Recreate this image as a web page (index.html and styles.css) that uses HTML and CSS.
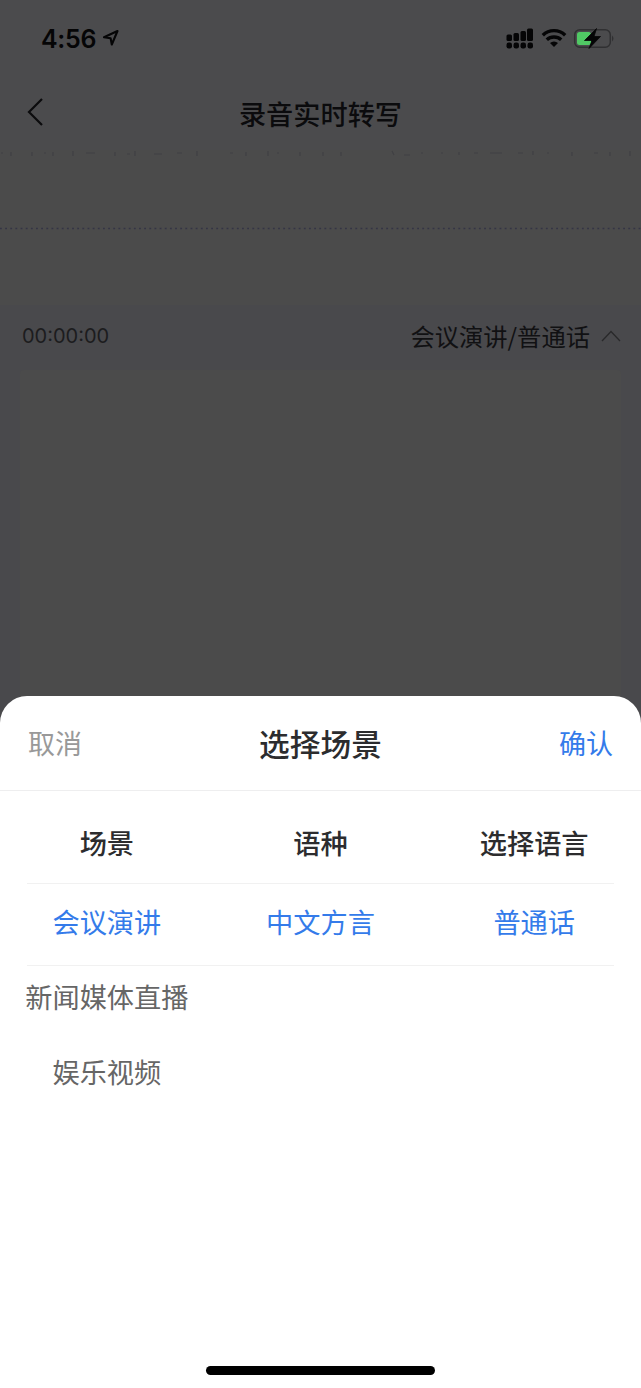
FILE: index.html
```html
<!DOCTYPE html>
<html lang="zh-CN">
<head>
<meta charset="utf-8">
<title>录音实时转写</title>
<link rel="stylesheet" href="styles.css">
</head>
<body>
<div class="phone">
  <header class="top">
    <div class="status">
      <span class="clock">4:56</span>
      <svg class="location" width="18" height="18" viewBox="0 0 18 18"><path d="M2 8.300 15.500 2 9.800 15.500 8.600 9.200Z" fill="none" stroke="#050506" stroke-width="2.100" stroke-linejoin="round"/></svg>
      <svg class="indicators" width="110" height="24" viewBox="0 0 110 24">
        <g fill="#050506">
          <rect x="1.500" y="8.500" width="5.500" height="6.500" rx="1.500"/><rect x="8.500" y="7" width="5.500" height="8" rx="1.500"/><rect x="15.500" y="5" width="5.500" height="10" rx="1.500"/><rect x="22" y="2.500" width="6" height="12.500" rx="1.500"/>
          <rect x="1.500" y="16.500" width="5.500" height="6" rx="2.200"/><rect x="8.500" y="16.500" width="5.500" height="6" rx="2.200"/><rect x="15.500" y="16.500" width="5.500" height="6" rx="2.200"/><rect x="22.500" y="16.500" width="5.500" height="6" rx="2.200"/>
          <path d="m49 21-4-4a6 6 0 0 1 8 0Z"/>
        </g>
        <path d="M37.800 9.200a16 16 0 0 1 22.400 0M41.800 13.800a10.500 10.500 0 0 1 14.400 0" fill="none" stroke="#050506" stroke-width="3.400"/>
        <rect x="69.700" y="3.700" width="35.600" height="17.600" rx="5" fill="none" stroke="#303032" stroke-width="1.500"/>
        <path d="M107 9.500q3 3 0 6Z" fill="#303032"/>
        <rect x="72" y="6" width="14" height="13" rx="2.500" fill="#50c864"/>
        <path d="M91.500 2.500 79.500 14.500h7.500l-3 8L95.500 10.500h-6.500Z" fill="#050506" stroke="#050506" stroke-width=".8"/>
      </svg>
    </div>
    <div class="nav">
      <svg class="back" width="20" height="30" viewBox="0 0 20 30"><path d="M17 2 4 15l13 13" fill="none" stroke="#0b0b0d" stroke-width="2.200"/></svg>
      <h1 class="page-title">录音实时转写</h1>
    </div>
  </header>

  <section class="wave">
    <svg class="ticks" width="641" height="8" viewBox="0 0 641 8"><path d="M1 3h2M11 2v4M32 2v4M44 3h2M53 2v4M73 1v5M86 3h9M115 2v4M127 4h3M135 1v5M154 4h8M177 3h5M197 1v5M230 3h3M246 2v4M268 1v5M277 3h2M300 2v4M323 2v4M341 2v4M392 1l2 4M404 5h6M421 3h2M441 3h2M459 2v3M474 3h4M490 3h12M518 3h5M533 1v4M547 3h2M572 2v4M594 3h4M610 2v4M630 1v5" stroke="#404044" stroke-width="1.200" fill="none"/></svg>
    <svg class="baseline" width="641" height="3" viewBox="0 0 641 3"><path d="M0 1.500h641" stroke="#343445" stroke-width="1.500" stroke-dasharray="1.800 3.350"/></svg>
  </section>

  <section class="record">
    <div class="record-bar">
      <span class="timer">00:00:00</span>
      <span class="mode">会议演讲/普通话</span>
      <svg class="chevron" width="20" height="12" viewBox="0 0 20 12"><path d="M1 11 10 1.500 19 11" fill="none" stroke="#29292b" stroke-width="1.300"/></svg>
    </div>
    <div class="transcript"></div>
  </section>

  <section class="sheet">
    <div class="sheet-head">
      <span class="cancel">取消</span>
      <h2 class="sheet-title">选择场景</h2>
      <span class="confirm">确认</span>
    </div>
    <div class="columns heads"><span>场景</span><span>语种</span><span>选择语言</span></div>
    <div class="columns selected"><span>会议演讲</span><span>中文方言</span><span>普通话</span></div>
    <div class="columns option"><span>新闻媒体直播</span></div>
    <div class="columns option"><span>娱乐视频</span></div>
    <div class="home-bar"></div>
  </section>
</div>
</body>
</html>
```
FILE: styles.css
```css
* { box-sizing: border-box; }
body { margin: 0; font-family: "Noto Sans CJK SC", sans-serif; }
.phone { width: 641px; height: 1388px; display: flex; flex-direction: column; overflow: hidden; background: #49494c; }
.top { height: 150px; background: #4b4b4d; flex: none; }
.status { height: 76px; display: flex; align-items: center; padding: 0 26px 0 41px; color: #050506; }
.clock { font: 600 25px/30px Inter, sans-serif; letter-spacing: -0.3px; width: 60px; white-space: nowrap; padding-top: 2px; }
.location { margin-left: 1px; }
.indicators { margin-left: auto; }
.nav { display: grid; grid-template-columns: 120px 1fr 120px; align-items: center; height: 74px; }
.back { margin: 0 0 2px 25px; }
.page-title { margin: 0; font-size: 27.2px; line-height: 40px; font-weight: 500; text-align: center; color: #0b0b0d; }
.wave { height: 155px; background: #4b4b4b; flex: none; }
.ticks, .baseline { display: block; }
.baseline { margin-top: 69px; }
.record { height: 409px; padding: 0 20px; display: flex; flex-direction: column; flex: none; }
.record-bar { height: 65px; display: flex; align-items: center; padding: 0 0 4px 2px; }
.timer { font: 400 20px/30px Inter, sans-serif; color: #1c1c1e; }
.mode { margin-left: auto; font-size: 24.3px; line-height: 36px; color: #111113; }
.chevron { margin-left: 11px; }
.transcript { flex: 1; background: #4b4b4b; border-radius: 4px 4px 0 0; }
.sheet { height: 692px; margin-top: -18px; flex: none; display: flex; flex-direction: column; background: #fff; border-radius: 27px 27px 0 0; }
.sheet-head { height: 95px; display: grid; grid-template-columns: 1fr auto 1fr; align-items: center; padding: 0 28px 1px; border-bottom: 1px solid #eeeeef; font-size: 27px; line-height: 40px; }
.cancel { color: #999; }
.sheet-title { margin: 0; font-size: 30.7px; line-height: 44px; font-weight: 500; color: #2c2c2e; }
.confirm { color: #347bea; text-align: right; }
.columns { display: grid; grid-template-columns: repeat(3, 1fr); align-items: center; text-align: center; font-size: 27.2px; line-height: 40px; white-space: nowrap; }
.heads { height: 93px; padding-top: 9px; font-weight: 500; color: #2c2c2e; }
.selected { height: 82px; padding-bottom: 8px; color: #347bea; }
.heads, .selected { background: linear-gradient(#f1f1f1, #f1f1f1) 50% 100% / 587px 1px no-repeat; }
.option { height: 75px; padding-bottom: 15px; color: #666; }
.home-bar { width: 229px; height: 9px; border-radius: 5px; background: #000; margin: auto auto 13px; }
```
